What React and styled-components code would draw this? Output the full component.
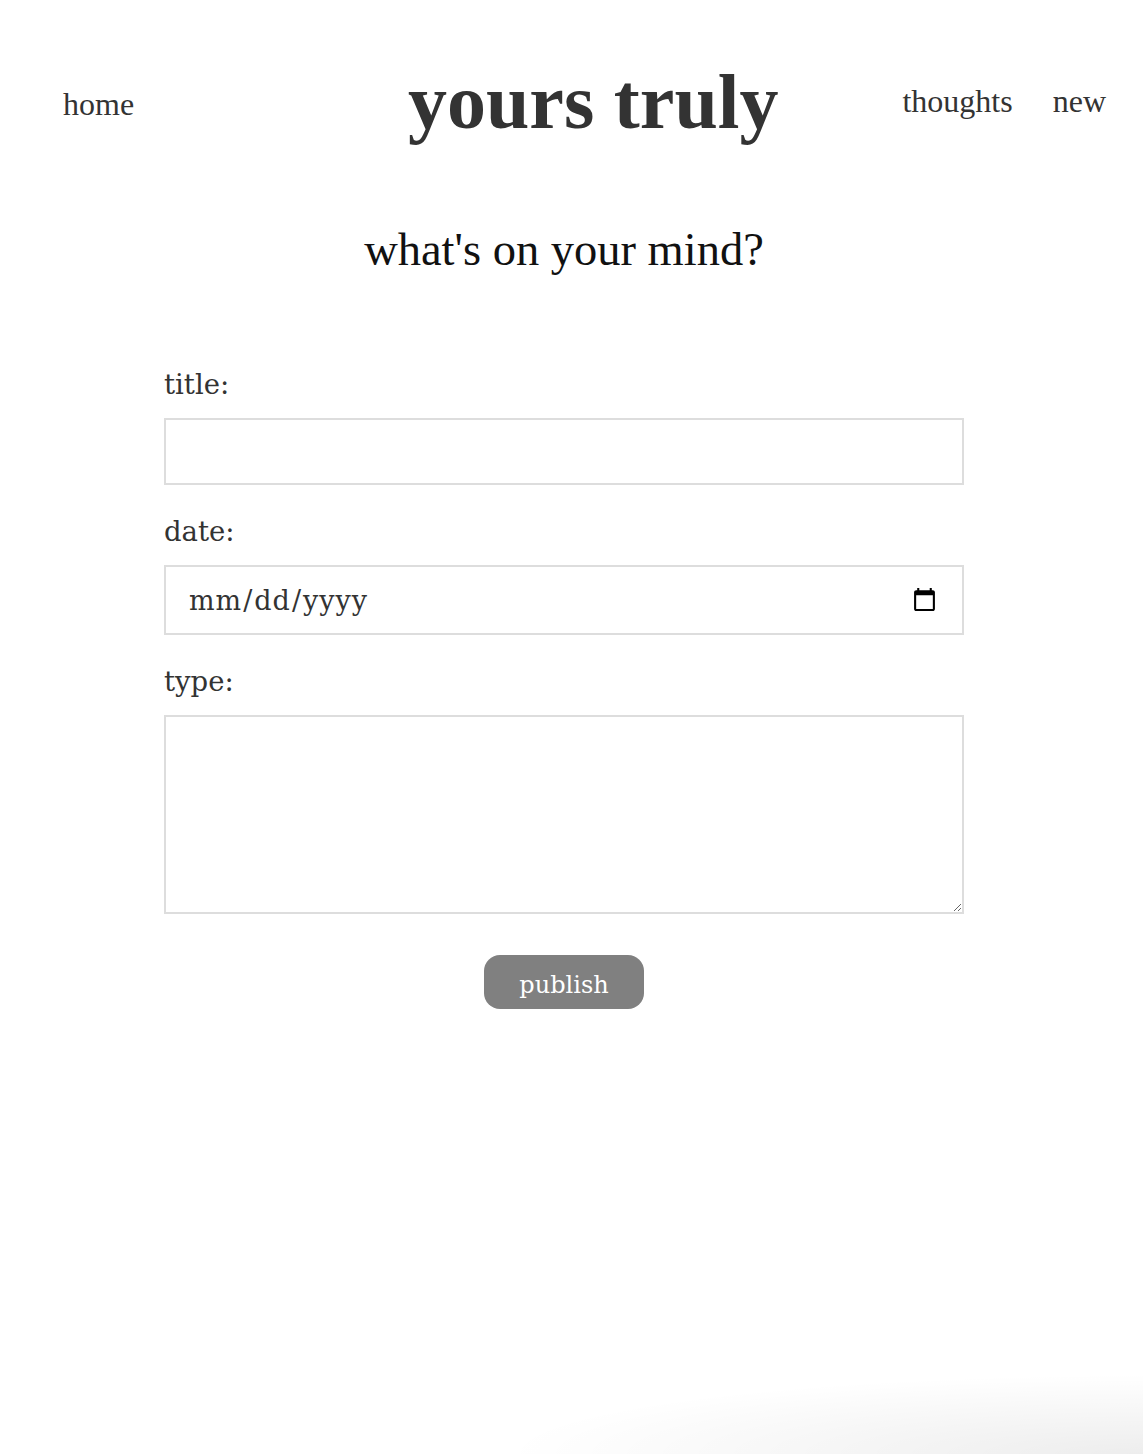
import React from 'react';
import styled, { createGlobalStyle } from 'styled-components';

const GlobalStyle = createGlobalStyle`
  html {
    background: #fff;
  }

  body {
    margin: 0;
    min-height: 1454px;
    color: #333;
    font-family: 'Liberation Serif', 'Times New Roman', serif;
    background:
      radial-gradient(ellipse 640px 80px at 100% 100%, rgba(0, 0, 0, 0.07), rgba(0, 0, 0, 0) 100%),
      #fff;
  }
`;

const Header = styled.header`
  display: flex;
  align-items: flex-start;
  padding: 63px 37px 0 63px;
`;

const NavLink = styled.a`
  display: block;
  color: #333;
  font-size: 32px;
  text-decoration: none;
  cursor: pointer;
`;

const HomeLink = styled(NavLink)`
  margin-top: 23px;
`;

const SiteTitle = styled.h1`
  margin: 0 0 0 auto;
  font-size: 78px;
  font-weight: bold;
  color: #333;
  line-height: 1;
`;

const Nav = styled.nav`
  display: flex;
  gap: 40px;
  margin: 20px 0 0 124px;
`;

const Main = styled.main`
  width: 800px;
  margin: 0 0 0 164px;
`;

const Heading = styled.h2`
  margin: 82px 0 92px;
  text-align: center;
  font-size: 46.5px;
  font-weight: normal;
  color: #111;
`;

const Form = styled.form`
  display: flex;
  flex-direction: column;
`;

const Label = styled.label`
  display: block;
  font-family: 'DejaVu Serif', Georgia, serif;
  font-size: 27.5px;
  color: #333;
  margin-bottom: 18px;
`;

const Field = styled.input`
  box-sizing: border-box;
  width: 100%;
  height: ${(p) => p.$height}px;
  border: 2px solid #ddd;
  margin: 0 0 ${(p) => p.$gap}px;
  padding: 0 22px;
  font-family: 'DejaVu Serif', Georgia, serif;
  font-size: 27px;
  letter-spacing: 1px;
  color: #333;
  background: #fff;
  outline: none;
`;

const TextArea = styled.textarea`
  box-sizing: border-box;
  width: 100%;
  height: 199px;
  border: 2px solid #ddd;
  margin: 0;
  padding: 12px 22px;
  font-family: 'DejaVu Serif', Georgia, serif;
  font-size: 24px;
  outline: none;
`;

const Actions = styled.div`
  display: flex;
  justify-content: center;
  margin-top: 41px;
`;

const PublishButton = styled.button`
  width: 160px;
  height: 54px;
  padding: 6px 0 0;
  border: none;
  border-radius: 16px;
  background: #808080;
  color: #fff;
  font-family: 'DejaVu Serif', Georgia, serif;
  font-size: 24px;
  cursor: pointer;
`;

const App = () => (
  <>
    <GlobalStyle />
    <Header>
      <HomeLink>home</HomeLink>
      <SiteTitle>yours truly</SiteTitle>
      <Nav>
        <NavLink>thoughts</NavLink>
        <NavLink>new</NavLink>
      </Nav>
    </Header>

    <Main>
      <Heading>what's on your mind?</Heading>
      <Form onSubmit={(e) => e.preventDefault()}>
        <Label htmlFor="title">title:</Label>
        <Field id="title" type="text" $height={67} $gap={30} />

        <Label htmlFor="date">date:</Label>
        <Field id="date" type="date" $height={70} $gap={30} />

        <Label htmlFor="body">type:</Label>
        <TextArea id="body" />

        <Actions>
          <PublishButton type="submit">publish</PublishButton>
        </Actions>
      </Form>
    </Main>
  </>
);

export default App;
